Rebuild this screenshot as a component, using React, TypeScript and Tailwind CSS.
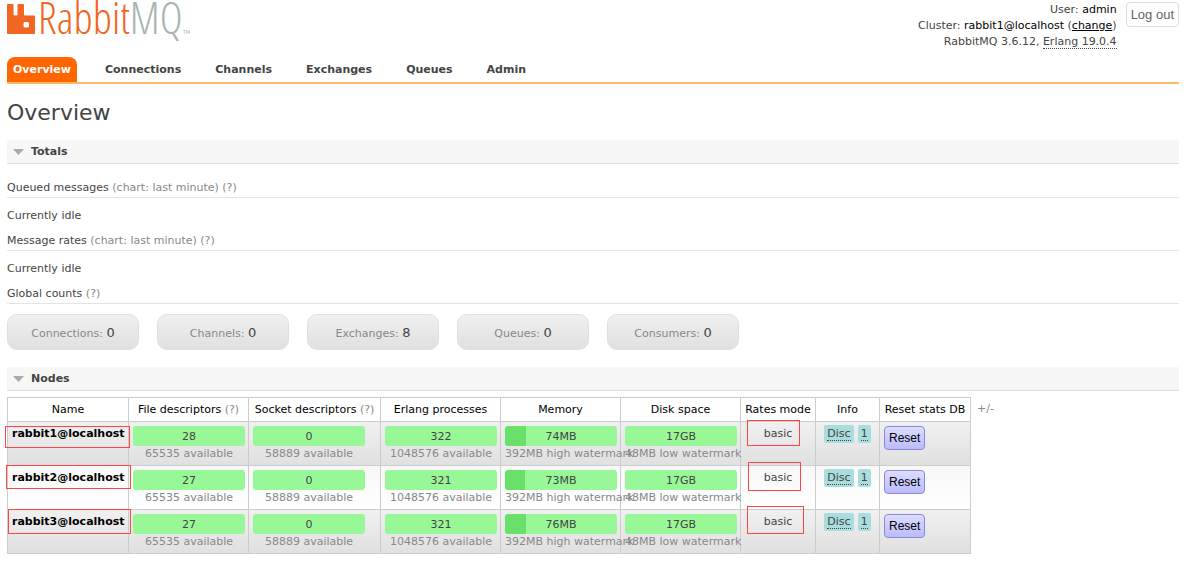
import { ReactNode } from "react";

const tabs = ["Overview", "Connections", "Channels", "Exchanges", "Queues", "Admin"];

const counts = [
    { label: "Connections", value: 0 },
    { label: "Channels", value: 0 },
    { label: "Exchanges", value: 8 },
    { label: "Queues", value: 0 },
    { label: "Consumers", value: 0 },
];

// nameMark / modeMark are the red marker boxes around the name and the rates mode
const nodes = [
    {
        name: "rabbit1@localhost", files: "28", procs: "322", memory: "74MB", memoryUsed: 19,
        nameMark: "-left-[3px] top-1 w-[125px] h-[22px]",
        modeMark: "left-1.5 -top-0.5 w-[53px] h-[26px]",
    },
    {
        name: "rabbit2@localhost", files: "27", procs: "321", memory: "73MB", memoryUsed: 18,
        nameMark: "-left-0.5 -top-px w-[125px] h-6",
        modeMark: "left-[7px] -top-1 w-[53px] h-[29px]",
    },
    {
        name: "rabbit3@localhost", files: "27", procs: "321", memory: "76MB", memoryUsed: 19,
        nameMark: "left-0 -top-px w-[123px] h-[25px]",
        modeMark: "left-1.5 -top-1 w-[57px] h-7",
    },
];

function Logo() {
    return (
        <a href="#" className="flex h-9 items-start pt-[3px]" aria-label="RabbitMQ">
            <svg width="29" height="32" viewBox="0 0 29 32" className="shrink-0">
                <path
                    fill="#f26522"
                    fillRule="evenodd"
                    d="M1 1h4.500a1 1 0 0 1 1 1v9.500a1 1 0 0 0 1 1h2a1 1 0 0 0 1-1V2a1 1 0 0 1 1-1H16a1 1 0 0 1 1 1v9.500a1 1 0 0 0 1 1h9a1 1 0 0 1 1 1V30a1 1 0 0 1-1 1H1a1 1 0 0 1-1-1V2a1 1 0 0 1 1-1zM18 19a1.500 1.500 0 0 0-1.500 1.500v2.500a1.500 1.500 0 0 0 1.500 1.500h2.500a1.500 1.500 0 0 0 1.500-1.500v-2.500a1.500 1.500 0 0 0-1.500-1.500z"
                />
            </svg>
            <span className="ml-0.5 font-['Open_Sans_Condensed_Light','Open_Sans_Condensed','Open_Sans',sans-serif] text-[44px] leading-7 font-light text-[#f26522]">
                Rabbit<span className="text-[#a6b5ae]">MQ</span>
            </span>
            <span className="self-end text-[5px] leading-2 text-[#a6b5ae]">TM</span>
        </a>
    );
}

function Section({ title }: { title: string }) {
    return (
        <h2 className="flex h-6 items-center border-b border-[#ddd] bg-[#f7f7f7] pt-px pl-1.5 font-bold">
            <svg width="11" height="6" viewBox="0 0 11 6" className="mr-[7px]">
                <path d="M0 0h11L5.500 6z" fill="#aaa" />
            </svg>
            {title}
        </h2>
    );
}

function SubHeading({ title, note }: { title: string; note?: string }) {
    return (
        <h3 className="border-b border-[#e4e4e4] pb-px leading-4">
            {title} {note && <span className="text-[#888]">{note} </span>}
            <Help />
        </h3>
    );
}

function Help() {
    return <a href="#" className="text-[#888]">(?)</a>;
}

function Th({ children }: { children: ReactNode }) {
    return <th className="border border-[#ccc] pt-px font-normal whitespace-nowrap text-black">{children}</th>;
}

function Bar({ value, note, used = 0 }: { value: string; note: string; used?: number }) {
    return (
        <td className="border border-[#ccc] px-1 pt-1 align-top">
            <div className="w-28">
                <div
                    className="h-5 rounded-[3px] bg-[#98f898] pt-px text-center leading-5"
                    style={{ backgroundImage: `linear-gradient(to right, #69e069 ${used}%, transparent ${used}%)` }}
                >
                    {value}
                </div>
                <div className="flex justify-center-safe leading-4 whitespace-nowrap text-[#888]">{note}</div>
            </div>
        </td>
    );
}

function Badge({ children }: { children: ReactNode }) {
    return (
        <span className="rounded-xs bg-[#aadddd] px-[3px] py-px">
            <abbr className="border-b border-dotted border-[#444] no-underline">{children}</abbr>
        </span>
    );
}

export default function App() {
    return (
        <div className="bg-white pr-[5px] pl-[7px] font-['DejaVu_Sans',Verdana,sans-serif] text-[11px] text-[#444]">
            {/* Header */}
            <header className="flex h-[57px] items-start justify-between">
                <Logo />
                <div className="flex gap-[9px]">
                    <div className="pt-0.5 text-right leading-4">
                        <p>User: <span className="text-black">admin</span></p>
                        <p>
                            Cluster: <span className="text-black">rabbit1@localhost</span> (
                            <a href="#" className="text-black underline">change</a>)
                        </p>
                        <p>
                            RabbitMQ 3.6.12, <abbr className="border-b border-dotted border-[#444] no-underline">Erlang 19.0.4</abbr>
                        </p>
                    </div>
                    <button className="mt-0.5 h-[25px] rounded-[4px] border border-[#ddd] px-1 font-['Liberation_Sans',sans-serif] text-[13px] text-[#666]">
                        Log out
                    </button>
                </div>
            </header>

            {/* Tabs */}
            <nav className="flex gap-[22px] border-b-2 border-[#ffb866]">
                {tabs.map((tab, i) => (
                    <a
                        key={tab}
                        href="#"
                        className={i === 0
                            ? "rounded-t-lg bg-[#ff6600] px-1.5 pt-px font-bold leading-6 text-white"
                            : "px-1.5 pt-px font-bold leading-6"}
                    >
                        {tab}
                    </a>
                ))}
            </nav>

            <main>
                <h1 className="pt-[15px] pb-[13px] text-[22px] leading-7">Overview</h1>

                {/* Totals */}
                <Section title="Totals" />
                <div className="pt-4">
                    <SubHeading title="Queued messages" note="(chart: last minute)" />
                    <p className="pt-[11px] pb-2.5 leading-[14px]">Currently idle</p>
                    <SubHeading title="Message rates" note="(chart: last minute)" />
                    <p className="pt-[11px] pb-2.5 leading-[14px]">Currently idle</p>
                    <SubHeading title="Global counts" />
                </div>
                <div className="flex gap-[18px] pt-2.5 pb-[17px]">
                    {counts.map((c) => (
                        <div
                            key={c.label}
                            className="h-9 w-[132px] rounded-[10px] border border-[#e0e0e0] bg-linear-to-b from-[#f0f0f0] to-[#e0e0e0] text-center leading-9 text-[#888]"
                        >
                            {c.label}: <span className="text-[13px] text-[#444]">{c.value}</span>
                        </div>
                    ))}
                </div>

                {/* Nodes */}
                <Section title="Nodes" />
                <div className="flex items-start gap-1.5 pt-1.5">
                    <table className="w-[964px] shrink-0 table-fixed border-collapse">
                        <colgroup>
                            <col className="w-[121px]" />
                            <col className="w-[120px]" />
                            <col className="w-[132px]" />
                            <col className="w-[120px]" />
                            <col className="w-[120px]" />
                            <col className="w-[120px]" />
                            <col className="w-[75px]" />
                            <col className="w-16" />
                            <col className="w-[91px]" />
                        </colgroup>
                        <thead>
                            <tr className="h-6">
                                <Th>Name</Th>
                                <Th>File descriptors <Help /></Th>
                                <Th>Socket descriptors <Help /></Th>
                                <Th>Erlang processes</Th>
                                <Th>Memory</Th>
                                <Th>Disk space</Th>
                                <Th>Rates mode</Th>
                                <Th>Info</Th>
                                <Th>Reset stats DB</Th>
                            </tr>
                        </thead>
                        <tbody>
                            {nodes.map((node) => (
                                <tr
                                    key={node.name}
                                    className="h-11 bg-linear-to-b odd:from-[#f0f0f0] odd:to-[#e0e0e0] even:from-[#f8f8f8] even:to-white"
                                >
                                    <td className="relative border border-[#ccc] px-1 pt-1 align-top font-bold text-black">
                                        <a href="#" className="leading-4">{node.name}</a>
                                        <span className={`absolute border border-[#f44] ${node.nameMark}`} />
                                    </td>
                                    <Bar value={node.files} note="65535 available" />
                                    <Bar value="0" note="58889 available" />
                                    <Bar value={node.procs} note="1048576 available" />
                                    <Bar value={node.memory} note="392MB high watermark" used={node.memoryUsed} />
                                    <Bar value="17GB" note="48MB low watermark" />
                                    <td className="relative border border-[#ccc] pt-1 text-center align-top leading-4">
                                        basic
                                        <span className={`absolute border border-[#f44] ${node.modeMark}`} />
                                    </td>
                                    <td className="border border-[#ccc] pt-[3px] align-top leading-4">
                                        <div className="flex justify-center gap-1 whitespace-nowrap">
                                            <Badge>Disc</Badge>
                                            <Badge>1</Badge>
                                        </div>
                                    </td>
                                    <td className="border border-[#ccc] px-1 pt-1 align-top">
                                        <button className="block h-6 rounded-[4px] border border-[#88d] bg-linear-to-b from-[#ddf] to-[#bbf] px-1 font-['Liberation_Sans',sans-serif] text-xs text-black">
                                            Reset
                                        </button>
                                    </td>
                                </tr>
                            ))}
                        </tbody>
                    </table>
                    <a href="#" className="leading-6 text-[#888]">+/-</a>
                </div>
            </main>
        </div>
    );
}
